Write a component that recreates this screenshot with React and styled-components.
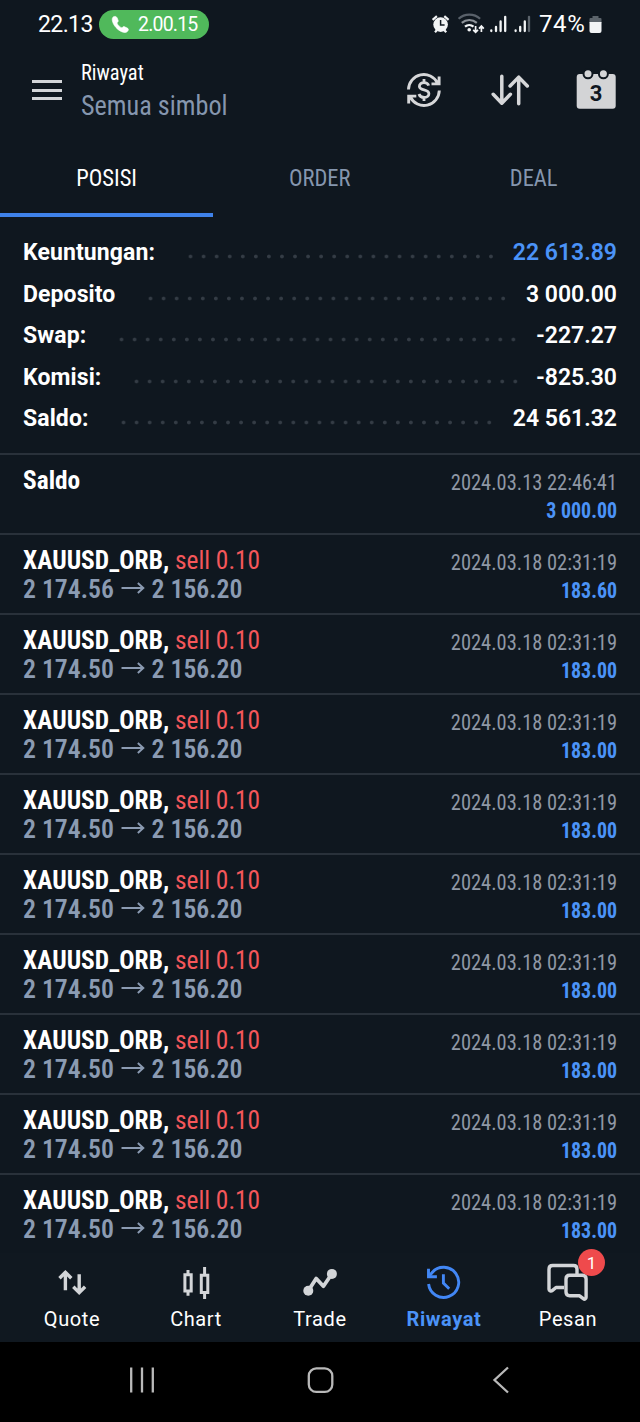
import React from "react";
import styled, { createGlobalStyle } from "styled-components";

const GlobalStyle = createGlobalStyle`
  body {
    margin: 0;
    background: #0f171f;
  }
`;

const summary = [
  { label: "Keuntungan:", value: "22 613.89", blue: true },
  { label: "Deposito", value: "3 000.00" },
  { label: "Swap:", value: "-227.27" },
  { label: "Komisi:", value: "-825.30" },
  { label: "Saldo:", value: "24 561.32" },
];

const openPrices = [
  "2 174.56",
  "2 174.50",
  "2 174.50",
  "2 174.50",
  "2 174.50",
  "2 174.50",
  "2 174.50",
  "2 174.50",
  "2 174.50",
];

const StatusIcons = () => (
  <svg width="100" height="30" viewBox="430 9 100 30" fill="none">
    <circle cx="440.6" cy="24.6" r="7.3" fill="#f2f4f5" />
    <path d="M432.6 19.8l4.3-3.6M448.6 19.8l-4.3-3.6M435 32.2l2-2.2M446.2 32.2l-2-2.2" stroke="#f2f4f5" strokeWidth="2.2" />
    <path d="M440.6 20v5h4" stroke="#0f171f" strokeWidth="1.5" />
    <path d="M458.6 18.8a16 16 0 0 1 21.5 0" stroke="#59616a" strokeWidth="2.2" />
    <path d="M461.8 22.8a11.5 11.5 0 0 1 15 0" stroke="#8c9298" strokeWidth="2.2" />
    <path d="M465 26.6a6.5 6.5 0 0 1 8.5 0" stroke="#f2f4f5" strokeWidth="2.2" />
    <circle cx="469.2" cy="29.8" r="1.8" fill="#f2f4f5" />
    <path d="M475.6 26v6M473.2 29.8l2.4 2.5 2.4-2.5M481.4 32v-5.5M479 28.6l2.4-2.5 2.4 2.5" stroke="#f2f4f5" strokeWidth="1.7" />
    <g stroke="#f2f4f5" strokeWidth="2.3" strokeLinecap="round">
      <path d="M491.3 30.5v.6M496 27v4.1M500.6 21.5v9.6M505.2 16.8v14.3" />
      <path d="M515.6 30.5v.6M520.2 27v4.1M524.8 21.5v9.6" />
      <path d="M529 16.8v14.3" stroke="#5b636b" />
    </g>
  </svg>
);

const SyncIcon = () => (
  <svg width="36" height="36" viewBox="0 0 36 36" fill="none" stroke="#d6d7d9" strokeWidth="2.9">
    <path d="M2.5 17.5A15.3 15.3 0 0 1 31.5 11M33.1 4.5v7.4H25.5" />
    <path d="M33.3 18.5A15.3 15.3 0 0 1 4.3 25M2.7 31.5v-7.4h7.6" />
    <path d="M22.7 13.6c-.7-2-2.4-3-4.7-3-2.7 0-4.6 1.4-4.6 3.6 0 5 9.5 2.3 9.5 7.5 0 2.3-2.1 3.7-4.8 3.7-2.6 0-4.5-1.3-5.1-3.4M18 7v3.6M18 25.4v3.6" strokeWidth="2.8" />
  </svg>
);

const SortIcon = () => (
  <svg width="38" height="34" viewBox="490 73 38 34" fill="none" stroke="#d6d7d9" strokeWidth="3.5" strokeLinecap="round" strokeLinejoin="round">
    <path d="M501.8 76.3V103M493.2 94.3l8.6 8.9 8.6-8.9M518.7 103.8V77.2M510.1 86l8.6-8.9 8.6 8.900" />
  </svg>
);

const CalendarIcon = () => (
  <svg width="40" height="42" viewBox="576 69 40 42">
    <rect x="576.7" y="74" width="39" height="34.7" rx="3" fill="#d3d4d6" />
    <g fill="#d3d4d6" stroke="#0f171f" strokeWidth="2">
      <circle cx="588" cy="73.8" r="4.5" />
      <circle cx="603.4" cy="73.8" r="4.5" />
    </g>
  </svg>
);

const QuoteIcon = () => (
  <svg width="40" height="40" viewBox="52 1263 40 40" fill="none" stroke="#d3d5d8" strokeWidth="3.4">
    <path d="M65.4 1290.3v-17M59.5 1278.3l5.9-6 5.900 6M79.2 1274.3v17M73.3 1286.7l5.9 6 5.9-6" />
  </svg>
);

const ChartIcon = () => (
  <svg width="40" height="40" viewBox="176 1263 40 40" fill="none" stroke="#d3d5d8" strokeWidth="3">
    <path d="M184.9 1274.8h6.3v16.2h-6.3zM201.3 1275.2h6.5v17.3h-6.5zM188 1270v4M188 1291.5v4.2M204.6 1267v7.5M204.6 1293v6" />
  </svg>
);

const TradeIcon = () => (
  <svg width="40" height="40" viewBox="300 1263 40 40" fill="none" stroke="#d3d5d8" strokeWidth="3.8" strokeLinejoin="round">
    <path d="M308.3 1290.7l7.9-12.2 7.2 7.700 8.5-12.5" />
    <g fill="#d3d5d8" stroke="none">
      <circle cx="308.3" cy="1290.7" r="5" />
      <circle cx="331.9" cy="1273.9" r="5" />
    </g>
  </svg>
);

const HistoryIcon = () => (
  <svg width="40" height="40" viewBox="424 1263 40 40" fill="none" stroke="#4287f5" strokeWidth="2.9">
    <path d="M428.6 1284a15.1 15.1 0 1 0 3.4-11.3l-3.5 4" />
    <path d="M428.5 1268.8v7.9h8.4" />
    <path d="M443.4 1274.3v8.8l5.8 5.6" />
  </svg>
);

const ChatIcon = () => (
  <svg width="44" height="44" viewBox="546 1261 44 44" fill="none" stroke="#d3d5d8" strokeWidth="3.4" strokeLinejoin="round">
    <path d="M564 1287.5h-8l-3.5 2.8c-1.5 1.2-3.5.5-3.500-1v-20.1q0-3.7 3.700-3.7h20.8q3.5 0 3.5 3.7v5" />
    <path d="M569.7 1275.3h12.6q3.8 0 3.8 3.8v18.2c0 1.8-1.5 2.4-2.8 1.4l-3.7-2.9h-9.900q-3.7 0-3.7-3.7v-13q0-3.8 3.7-3.8z" />
  </svg>
);

const navItems = [
  { label: "Quote", icon: <QuoteIcon /> },
  { label: "Chart", icon: <ChartIcon /> },
  { label: "Trade", icon: <TradeIcon /> },
  { label: "Riwayat", icon: <HistoryIcon />, active: true },
  { label: "Pesan", icon: <ChatIcon />, badge: 1 },
];

const App = () => {
  return (
    <Screen>
      <GlobalStyle />
      <StatusBar>
        <Clock>22.13</Clock>
        <CallPill>
          <svg width="17" height="17" viewBox="0 0 17 17" fill="#fff" stroke="#fff" strokeWidth=".6">
            <path d="M1.5.8C3 0 4.6.4 5.2 2l.9 2.3c.4 1-.1 1.7-1.2 2.6.8 2.1 2.9 4.1 5.1 5 .9-1.1 1.7-1.6 2.6-1.1l2.7 1.3c1.3.7 1.4 1.8.5 2.9-1.3 1.6-3.3 1.9-5.5 1C5.5 14 1.6 9.9.4 5 0 3.2.2 1.6 1.5.8z" />
          </svg>
          <span>2.00.15</span>
        </CallPill>
        <StatusRight>
          <StatusIcons />
          <Percent>74%</Percent>
          <svg width="13" height="19" viewBox="0 0 13 19">
            <path d="M3.5 1h6v2h2a1 1 0 0 1 1 1v4H.5V4a1 1 0 0 1 1-1h2z" fill="#5c646b" />
            <path d="M.5 7h12v9a2 2 0 0 1-2 2h-8a2 2 0 0 1-2-2z" fill="#f2f4f5" />
          </svg>
        </StatusRight>
      </StatusBar>

      <Header>
        <MenuButton>
          <i />
          <i />
          <i />
        </MenuButton>
        <Titles>
          <Title>Riwayat</Title>
          <Subtitle>Semua simbol</Subtitle>
        </Titles>
        <Actions>
          <SyncIcon />
          <SortIcon />
          <Calendar>
            <CalendarIcon />
            <span>3</span>
          </Calendar>
        </Actions>
      </Header>

      <Tabs>
        <Tab $active>
          <TabLabel>POSISI</TabLabel>
        </Tab>
        <Tab>
          <TabLabel>ORDER</TabLabel>
        </Tab>
        <Tab>
          <TabLabel>DEAL</TabLabel>
        </Tab>
      </Tabs>

      <Summary>
        {summary.map((s) => (
          <SummaryRow key={s.label}>
            <SummaryLabel>{s.label}</SummaryLabel>
            <Leader />
            <SummaryValue $blue={s.blue}>{s.value}</SummaryValue>
          </SummaryRow>
        ))}
      </Summary>

      <List>
        <Row>
          <Left>
            <Symbol>Saldo</Symbol>
          </Left>
          <Right>
            <DateText>2024.03.13 22:46:41</DateText>
            <Profit>3 000.00</Profit>
          </Right>
        </Row>
        {openPrices.map((price, index) => (
          <Row key={`deal_${index}`}>
            <Left>
              <Symbol>
                XAUUSD_ORB, <Sell>sell 0.10</Sell>
              </Symbol>
              <Prices>
                <span>{price}</span>
                <svg width="24" height="14" viewBox="0 0 24 14" fill="none" stroke="#8b9bb2" strokeWidth="2">
                  <path d="M.5 6h22M17 1l5.500 5L17 11" />
                </svg>
                <span>2 156.20</span>
              </Prices>
            </Left>
            <Right>
              <DateText>2024.03.18 02:31:19</DateText>
              <Profit>{index === 0 ? "183.60" : "183.00"}</Profit>
            </Right>
          </Row>
        ))}
      </List>

      <BottomNav>
        {navItems.map((item) => (
          <NavItem key={item.label} $active={item.active}>
            <NavIcon>
              {item.icon}
              {item.badge && <Badge>{item.badge}</Badge>}
            </NavIcon>
            <span>{item.label}</span>
          </NavItem>
        ))}
      </BottomNav>

      <SystemBar>
        <svg width="28" height="28" viewBox="0 0 28 28" stroke="#b9b9b9" strokeWidth="2.3">
          <path d="M3.2 1.5v25M14 1.5v25M24.8 1.5v25" />
        </svg>
        <svg width="28" height="28" viewBox="0 0 28 28" fill="none" stroke="#b9b9b9" strokeWidth="2.3">
          <rect x="1.8" y="2.4" width="23.5" height="23.5" rx="7.5" />
        </svg>
        <svg width="28" height="28" viewBox="0 0 28 28" fill="none" stroke="#b9b9b9" strokeWidth="2.3">
          <path d="M21 1.5L7.5 14 21 26.5" />
        </svg>
      </SystemBar>
    </Screen>
  );
};

const condensed = `
  font-family: "Roboto Condensed", Roboto, sans-serif;
  font-stretch: 75%;
`;

const Screen = styled.div`
  width: 640px;
  height: 1422px;
  overflow: hidden;
  display: flex;
  flex-direction: column;
  background: #0f171f;
  color: #fff;
  font-family: Roboto, sans-serif;
  white-space: nowrap;

  svg {
    display: block;
    flex: none;
    overflow: visible;
  }
`;

const StatusBar = styled.div`
  height: 48px;
  flex: none;
  box-sizing: border-box;
  display: flex;
  align-items: center;
  padding: 0 38px;
`;

const Clock = styled.span`
  width: 61px;
  font-size: 23px;
  letter-spacing: -0.6px;
`;

const CallPill = styled.div`
  display: flex;
  align-items: center;
  gap: 9px;
  width: 110px;
  height: 29px;
  box-sizing: border-box;
  padding-left: 13px;
  border-radius: 15px;
  background: #50b95b;
  font-size: 19.5px;
  letter-spacing: -0.8px;
`;

const StatusRight = styled.div`
  margin-left: auto;
  display: flex;
  align-items: center;
`;

const Percent = styled.span`
  width: 50px;
  padding-left: 9px;
  font-size: 24px;
  letter-spacing: 0.6px;
`;

const Header = styled.header`
  height: 92px;
  flex: none;
  display: flex;
`;

const MenuButton = styled.div`
  width: 30px;
  margin: 32px 19px 0 32px;
  display: flex;
  flex-direction: column;
  gap: 5.5px;

  i {
    height: 3px;
    background: #d3d5d8;
  }
`;

const Titles = styled.div`
  display: flex;
  flex-direction: column;
  padding-top: 12px;
`;

const Title = styled.div`
  ${condensed}
  font-size: 22px;
  line-height: 26px;
  transform: scaleX(0.93);
  transform-origin: left;
`;

const Subtitle = styled.div`
  ${condensed}
  font-size: 27px;
  line-height: 32px;
  margin-top: 4px;
  color: #8596ae;
  transform: scaleX(0.97);
  transform-origin: left;
`;

const Actions = styled.div`
  margin-left: auto;
  padding: 21px 24px 0 0;
  height: 42px;
  display: flex;
  align-items: center;
  gap: 48px;
`;

const Calendar = styled.div`
  position: relative;

  span {
    position: absolute;
    left: 0;
    top: 11px;
    width: 40px;
    text-align: center;
    font-size: 22px;
    line-height: 28px;
    font-weight: 700;
    color: #0f171f;
  }
`;

const Tabs = styled.div`
  height: 77px;
  flex: none;
  display: grid;
  grid-template-columns: repeat(3, 1fr);
`;

const Tab = styled.div`
  box-sizing: border-box;
  padding-top: 25px;
  text-align: center;
  color: ${(props) => (props.$active ? "#fff" : "#8596ae")};
  border-bottom: 4px solid ${(props) => (props.$active ? "#3f82ea" : "transparent")};
`;

const TabLabel = styled.div`
  ${condensed}
  font-size: 23px;
  line-height: 28px;
  transform: scaleX(0.98);
`;

const Summary = styled.div`
  height: 236px;
  flex: none;
  box-sizing: border-box;
  padding: 15px 23px 0;
`;

const SummaryRow = styled.div`
  display: flex;
  height: 41.5px;
  line-height: 42px;
  font-size: 23px;
`;

const SummaryLabel = styled.span`
  font-weight: 700;
  letter-spacing: 0.1px;
`;

const Leader = styled.div`
  flex: 1;
  margin: 18px 16px 0 28.5px;
  height: 13px;
  background: radial-gradient(circle at 6.5px 6.5px, #343c45 1.4px, transparent 2.3px) 0 0 / 13.07px 13px repeat-x;
`;

const SummaryValue = styled.span`
  font-weight: 600;
  color: ${(props) => (props.$blue ? "#4b93f7" : "#fff")};
`;

const List = styled.div`
  height: 800px;
  flex: none;
`;

const Row = styled.div`
  height: 80px;
  box-sizing: border-box;
  display: flex;
  justify-content: space-between;
  border-top: 2px solid #29313a;
  padding: 10px 23px 0;
`;

const Left = styled.div`
  ${condensed}
  font-size: 26px;
`;

const Right = styled.div`
  ${condensed}
  text-align: right;
  font-size: 22px;
`;

const Symbol = styled.div`
  font-weight: 700;
  line-height: 30px;
  transform: scaleX(0.976);
  transform-origin: left;
`;

const Sell = styled.span`
  font-weight: 400;
  color: #f4575b;
`;

const Prices = styled.div`
  display: flex;
  align-items: center;
  gap: 7px;
  height: 28px;
  line-height: 28px;
  font-weight: 600;
  color: #8b9bb2;
  transform: scaleX(0.99);
  transform-origin: left;
`;

const DateText = styled.div`
  font-size: 22.5px;
  line-height: 30px;
  padding-top: 2px;
  color: #8f98a5;
  transform: scaleX(0.908);
  transform-origin: right;
`;

const Profit = styled.div`
  line-height: 28px;
  font-weight: 700;
  color: #4b93f7;
  transform: scaleX(0.905);
  transform-origin: right;
`;

const BottomNav = styled.nav`
  height: 89px;
  flex: none;
  box-sizing: border-box;
  padding: 7px 10px 0;
  display: grid;
  grid-template-columns: repeat(5, 1fr);
  background: #101820;
`;

const NavItem = styled.div`
  display: flex;
  flex-direction: column;
  align-items: center;
  font-size: 20px;
  line-height: 26px;
  letter-spacing: 0.6px;
  font-weight: ${(props) => (props.$active ? 700 : 400)};
  color: ${(props) => (props.$active ? "#4b93f7" : "#fff")};
`;

const NavIcon = styled.div`
  position: relative;
  height: 46px;
  display: flex;
  align-items: center;
`;

const Badge = styled.div`
  position: absolute;
  left: 32px;
  top: -11.5px;
  width: 27px;
  height: 27px;
  border-radius: 50%;
  background: #ef4a4c;
  text-align: center;
  font-size: 17px;
  line-height: 28px;
  letter-spacing: 0;
`;

const SystemBar = styled.div`
  height: 80px;
  flex: none;
  box-sizing: border-box;
  padding: 0 125.5px 4px 127.5px;
  display: flex;
  align-items: center;
  justify-content: space-between;
  background: #000;
`;

export default App;
